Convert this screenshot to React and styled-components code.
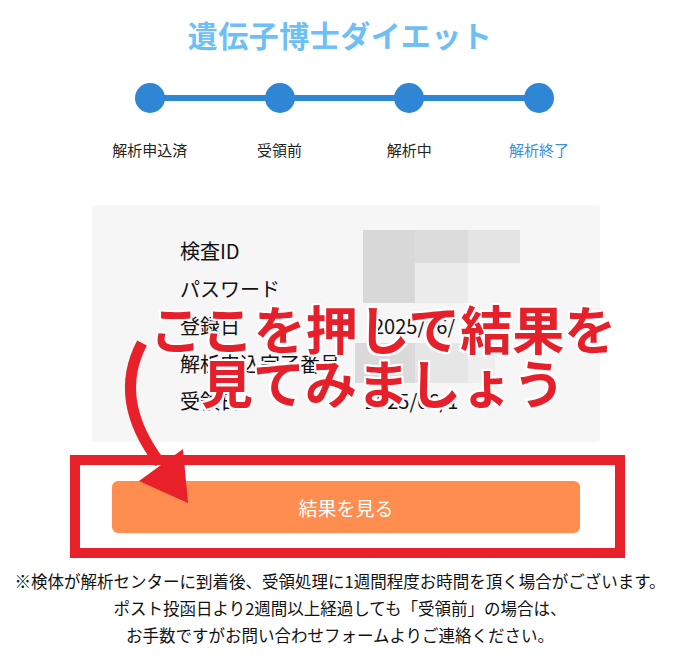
import React from 'react';
import styled, { createGlobalStyle } from 'styled-components';

const GlobalStyle = createGlobalStyle`
  body {
    margin: 0;
    background: #fff;
    font-family: "Noto Sans CJK JP", "Noto Sans", sans-serif;
    color: #111;
  }
`;

const Page = styled.div`
  position: relative;
  width: 680px;
  height: 657px;
  overflow: hidden;
  background: #fff;
`;

const Title = styled.h1`
  margin: 0;
  padding-top: 14px;
  font-size: 30px;
  line-height: 40px;
  font-weight: 700;
  text-align: center;
  color: #6ebff5;
  letter-spacing: 0.5px;
`;

const Steps = styled.ol`
  list-style: none;
  margin: 29px 0 0 85px;
  padding: 0;
  display: grid;
  grid-template-columns: repeat(4, 129.7px);
`;

const Step = styled.li`
  position: relative;
  display: flex;
  flex-direction: column;
  align-items: center;

  /* connector to the next step */
  &:not(:last-child)::after {
    content: '';
    position: absolute;
    top: 12px;
    left: 50%;
    width: 100%;
    height: 6px;
    background: #2f86d5;
  }
`;

const Dot = styled.span`
  position: relative;
  z-index: 1;
  width: 30px;
  height: 30px;
  border-radius: 50%;
  background: #2f86d5;
`;

const StepLabel = styled.span`
  margin-top: 26px;
  font-size: 15px;
  line-height: 22px;
  color: ${props => (props.$active ? '#3a8fd8' : '#222')};
  white-space: nowrap;
`;

const Card = styled.div`
  position: relative;
  box-sizing: border-box;
  margin: 44px 0 0 92px;
  width: 508px;
  height: 237px;
  padding: 27px 0 0 88px;
  background: #f6f6f6;
  border-radius: 3px;
  display: grid;
  grid-template-columns: 185px 1fr;
  grid-auto-rows: 37.5px;
`;

const Label = styled.div`
  display: flex;
  align-items: center;
  font-size: 20px;
  color: #111;
  white-space: nowrap;
`;

const Value = styled.div`
  display: flex;
  align-items: center;
  padding-left: ${props => props.$indent || 0}px;
  font-size: 20px;
  color: #111;
  white-space: nowrap;
`;

// pixelated (blurred) value
const Mosaic = styled.div`
  align-self: center;
  display: grid;
  grid-template-columns: ${props => props.$cols};
  grid-template-rows: ${props => props.$rows};
  margin-left: ${props => props.$shift}px;
  grid-row: ${props => props.$span ? `span ${props.$span}` : 'auto'};
  margin-top: ${props => props.$top || 0}px;
`;

const Cell = styled.span`
  background: ${props => props.$c};
`;

const Callout = styled.div`
  position: absolute;
  top: 96px;
  left: 46px;
  width: 490px;
  text-align: center;
  font-size: 52px;
  line-height: 54px;
  font-weight: 700;
  color: #e6202b;
  white-space: nowrap;
  pointer-events: none;
  text-shadow:
    2px 0 0 #fff, -2px 0 0 #fff, 0 2px 0 #fff, 0 -2px 0 #fff,
    2px 2px 0 #fff, -2px -2px 0 #fff, 2px -2px 0 #fff, -2px 2px 0 #fff;
`;

const Highlight = styled.div`
  box-sizing: border-box;
  margin: 13px 0 0 70px;
  width: 555px;
  height: 103px;
  border: 10px solid #e8202a;
  padding: 16px 35px 0 32px;
`;

const ResultButton = styled.button`
  display: block;
  width: 100%;
  height: 52px;
  border: none;
  border-radius: 6px;
  background: #ff8d4f;
  color: #fff;
  font-family: inherit;
  font-size: 19px;
  cursor: pointer;
`;

const Notes = styled.p`
  margin: 10px 0 0;
  text-align: center;
  font-size: 16.5px;
  line-height: 27px;
  color: #111;

  span {
    display: block;
    white-space: nowrap;
  }
`;

const ArrowLayer = styled.svg`
  position: absolute;
  top: 0;
  left: 0;
  pointer-events: none;
`;

const steps = ['解析申込済', '受領前', '解析中', '解析終了'];

const App = () => (
  <Page>
    <GlobalStyle />
    <Title>遺伝子博士ダイエット</Title>

    <Steps>
      {steps.map((s, i) => (
        <Step key={s}>
          <Dot />
          <StepLabel $active={i === steps.length - 1}>{s}</StepLabel>
        </Step>
      ))}
    </Steps>

    <Card>
      <Label>検査ID</Label>
      <Mosaic $span={2} $shift={-2} $top={-7} $cols="52px 53px 52px" $rows="33px 40px">
        <Cell $c="#d8d8d8" />
        <Cell $c="#dcdcdc" />
        <Cell $c="#e4e4e4" />
        <Cell $c="#d8d8d8" />
        <Cell $c="#ececec" />
        <Cell $c="transparent" />
      </Mosaic>
      <Label>パスワード</Label>
      <Label>登録日</Label>
      <Value $indent={8}>2025/06/</Value>
      <Label>解析申込完了番号</Label>
      <Mosaic $shift={-10} $cols="60px 53px 27px" $rows="40px">
        <Cell $c="#dadada" />
        <Cell $c="#e6e6e6" />
        <Cell $c="#eeeeee" />
      </Mosaic>
      <Label>受領日</Label>
      <Value>2025/06/1</Value>

      <Callout>
        <div>ここを押して結果を</div>
        <div>見てみましょう</div>
      </Callout>
    </Card>

    <Highlight>
      <ResultButton>結果を見る</ResultButton>
    </Highlight>

    <Notes>
      <span>※検体が解析センターに到着後、受領処理に1週間程度お時間を頂く場合がございます。</span>
      <span>ポスト投函日より2週間以上経過しても「受領前」の場合は、</span>
      <span>お手数ですがお問い合わせフォームよりご連絡ください。</span>
    </Notes>

    <ArrowLayer width="680" height="657" viewBox="0 0 680 657">
      <path d="M142 343 Q112 400 160 463" fill="none" stroke="#e8202a" strokeWidth="11" />
      <polygon points="139,481 183,449 188,503" fill="#e8202a" />
    </ArrowLayer>
  </Page>
);

export default App;
